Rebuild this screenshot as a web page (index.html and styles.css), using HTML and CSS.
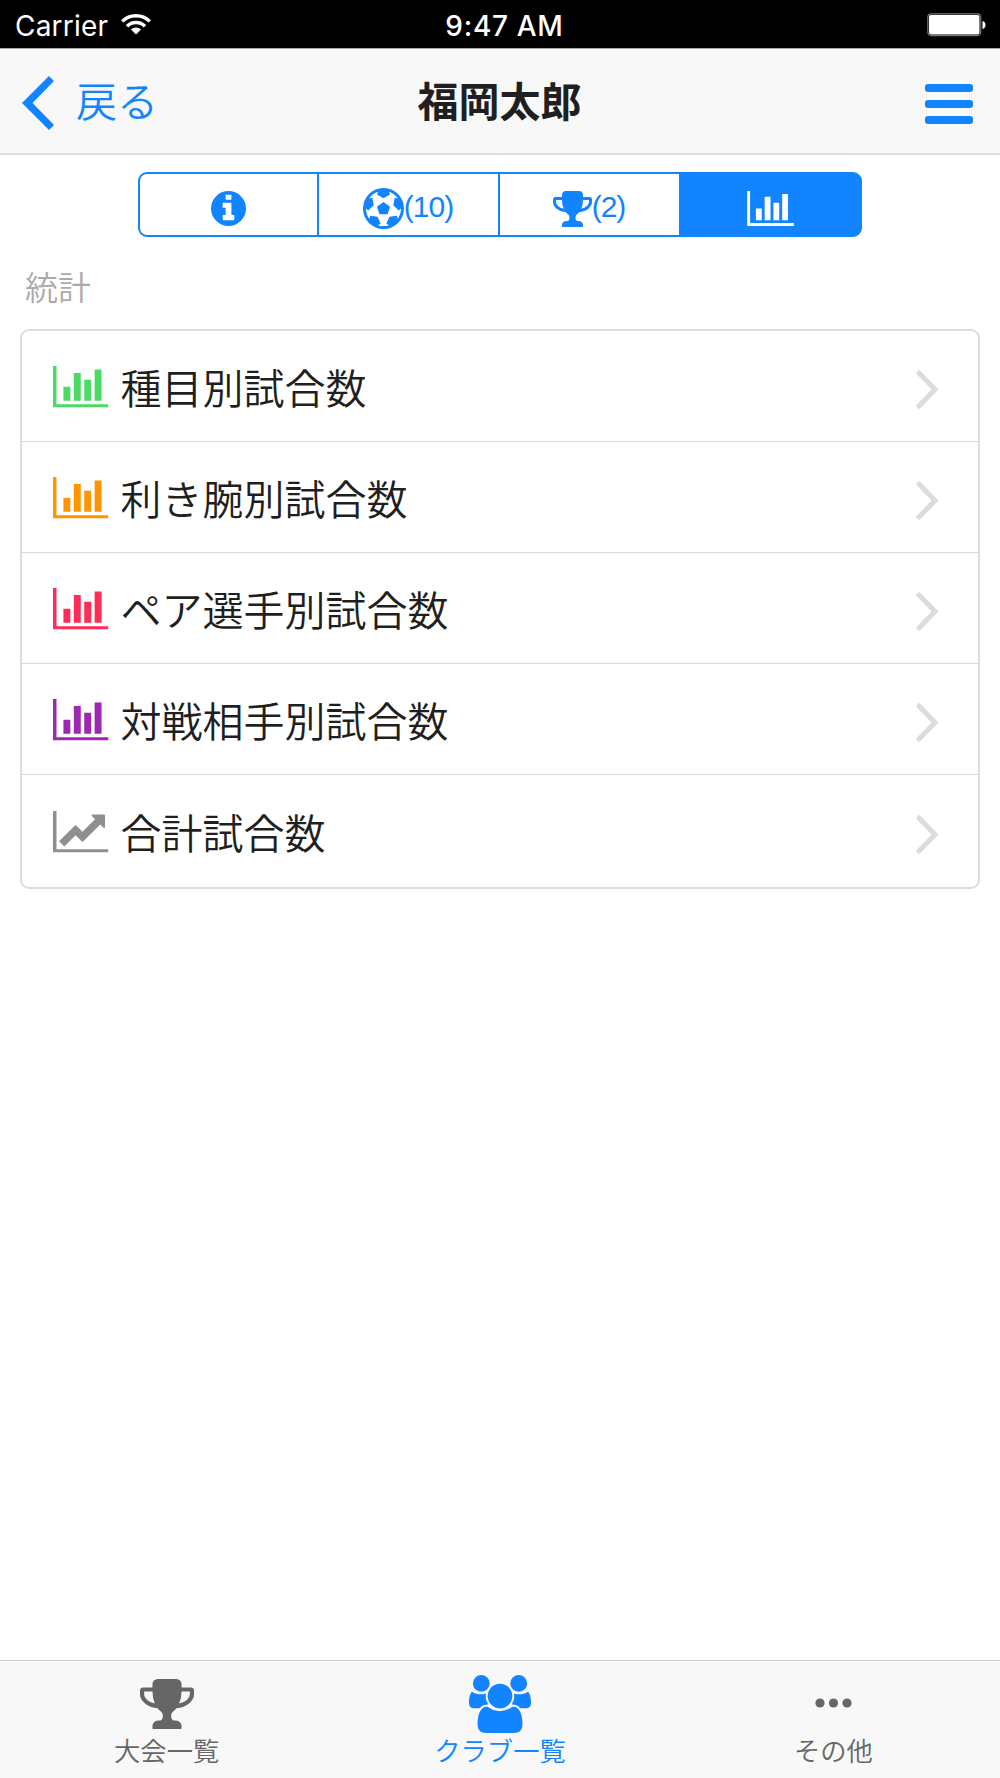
FILE: index.html
```html
<!DOCTYPE html>
<html lang="ja">
<head>
<meta charset="utf-8">
<title>福岡太郎</title>
<link rel="stylesheet" href="styles.css">
</head>
<body>
<svg class="defs" width="0" height="0" aria-hidden="true">
  <symbol id="bars" viewBox="0 128 2048 1536"><path d="M640 896v512H384V896zM1024 384v1024H768V384zM2048 1536v128H0V128h128v1408zM1408 640v768h-256V640zM1792 256v1152h-256V256z"/></symbol>
  <symbol id="line" viewBox="0 128 2048 1536"><path d="M2048 1536v128H0V128h128v1408zM1920 288v435q0 21-19.500 29.500t-35.500-7.500l-121-121-633 633q-10 10-23 10t-23-10l-233-233-416 416-192-192 585-585q10-10 23-10t23 10l233 233 464-464-121-121q-16-16-7.500-35.500t29.500-19.500h435q14 0 23 9t9 23z"/></symbol>
  <symbol id="trophy" viewBox="0 128 1664 1536"><path d="M458 883q-74-162-74-371H128v96q0 78 94.500 162T458 883zM1536 608v-96h-256q0 209-74 371 141-29 235.500-113T1536 608zM1664 480v128q0 71-41.500 143t-112 130-173 97.500T1122 1024q-42 54-95 95-38 34-52.500 72.500T960 1280q0 54 30.500 91t97.500 37q75 0 133.500 45.500T1280 1568v64q0 14-9 23t-23 9H416q-14 0-23-9t-9-23v-64q0-69 58.500-114.500T576 1408q67 0 97.500-37t30.500-91q0-50-14.500-88.500T637 1119q-53-41-95-95-113-5-215.500-44.500t-173-97.500-112-130T0 608V480q0-40 28-68t68-28h288v-96q0-66 47-113t113-47h576q66 0 113 47t47 113v96h288q40 0 68 28t28 68z"/></symbol>
  <symbol id="chevron" viewBox="0 0 23 39"><path d="M3 3L19 19.500L3 36" fill="none" stroke="currentColor" stroke-width="5" stroke-linecap="round" stroke-linejoin="miter"/></symbol>
</svg>

<div class="status">
  <div class="carrier">Carrier
    <svg class="wifi" viewBox="0 0 30 22"><g fill="none" stroke="currentColor" stroke-width="3.400"><path d="M1.200 8.400a19.500 19.500 0 0 1 27.600 0"/><path d="M6 13.200a12.700 12.700 0 0 1 18 0"/></g><path d="M15 21.500l-5-5a7.100 7.100 0 0 1 10 0z" fill="currentColor"/></svg>
  </div>
  <div class="clock">9:47 AM</div>
  <svg class="battery" viewBox="0 0 60 24"><rect x=".8" y=".8" width="53" height="21.800" rx="3.500" fill="none" stroke="#777" stroke-width="1.200"/><rect x="2" y="2" width="50.500" height="19.400" rx="2" fill="#fff"/><path d="M55.500 8c4 1 4 7 0 8z" fill="#fff"/></svg>
</div>

<header class="nav">
  <a class="back"><svg viewBox="0 0 32 54"><path d="M27 0l5 5L10.500 27 32 49l-5 5L0 27z"/></svg><span>戻る</span></a>
  <h1>福岡太郎</h1>
  <div class="menu"><i></i><i></i><i></i></div>
</header>

<main>
  <div class="segments">
    <div class="seg"><svg class="info" viewBox="0 128 1536 1536"><path d="M1024 1376v-160q0-14-9-23t-23-9h-96V672q0-14-9-23t-23-9H544q-14 0-23 9t-9 23v160q0 14 9 23t23 9h96v320h-96q-14 0-23 9t-9 23v160q0 14 9 23t23 9h448q14 0 23-9t9-23zM896 480V320q0-14-9-23t-23-9H672q-14 0-23 9t-9 23v160q0 14 9 23t23 9h192q14 0 23-9t9-23zM1536 896a768 768 0 1 1-1536 0 768 768 0 0 1 1536 0z"/></svg></div>
    <div class="seg"><svg class="ball" viewBox="0 0 1792 1792"><path fill-rule="evenodd" d="M609 816l287-208 287 208-109 336H719zM896 0q182 0 348 71t286 191 191 286 71 348-71 348-191 286-286 191-348 71-348-71-286-191-191-286T0 896t71-348 191-286T548 71 896 0zm619 1350q149-203 149-454v-3l-102 89-240-224 63-323 134 12q-150-206-389-282l53 124-287 159-287-159 53-124q-239 76-389 282l135-12 62 323-240 224-102-89v3q0 251 149 454l30-132 326 40 139 298-116 69q117 39 240 39t240-39l-116-69 139-298 326-40z"/></svg><span>(10)</span></div>
    <div class="seg"><svg class="cup"><use href="#trophy"/></svg><span>(2)</span></div>
    <div class="seg active"><svg class="chart"><use href="#bars"/></svg></div>
  </div>

  <h2>統計</h2>

  <ul class="list">
    <li><svg class="icon green"><use href="#bars"/></svg><span>種目別試合数</span><svg class="chevron"><use href="#chevron"/></svg></li>
    <li><svg class="icon orange"><use href="#bars"/></svg><span>利き腕別試合数</span><svg class="chevron"><use href="#chevron"/></svg></li>
    <li><svg class="icon red"><use href="#bars"/></svg><span>ペア選手別試合数</span><svg class="chevron"><use href="#chevron"/></svg></li>
    <li><svg class="icon purple"><use href="#bars"/></svg><span>対戦相手別試合数</span><svg class="chevron"><use href="#chevron"/></svg></li>
    <li><svg class="icon gray"><use href="#line"/></svg><span>合計試合数</span><svg class="chevron"><use href="#chevron"/></svg></li>
  </ul>
</main>

<footer class="tabs">
  <a class="tab"><svg class="tab-cup"><use href="#trophy"/></svg><span>大会一覧</span></a>
  <a class="tab current"><svg class="people" viewBox="0 0 64 60"><circle cx="13.300" cy="8.400" r="8.400"/><circle cx="50.700" cy="8.400" r="8.400"/><path d="M4 16.700c5 3.300 11 3.300 16 1.200v15.400H7c-4.500 0-6-1.800-6-5.800 0-4 .8-8.800 3-10.800zM60 16.700c-5 3.300-11 3.300-16 1.200v15.400h13c4.500 0 6-1.800 6-5.800 0-4-.8-8.800-3-10.800z"/><g class="front"><path d="M19.500 30.500c8 6 17 6 25 0 8 0 11 9 11 18.500 0 6.500-3.500 10-9.700 10H18.200c-6.200 0-9.700-3.500-9.700-10 0-9.500 3-18.500 11-18.500z"/><circle cx="32" cy="21" r="13.300"/></g></svg><span>クラブ一覧</span></a>
  <a class="tab"><svg class="dots" viewBox="0 0 37 10"><circle cx="5" cy="5" r="4.600"/><circle cx="18.500" cy="5" r="4.600"/><circle cx="32" cy="5" r="4.600"/></svg><span>その他</span></a>
</footer>
</body>
</html>
```
FILE: styles.css
```css
* { box-sizing: border-box; }

body {
  margin: 0;
  height: 1778px;
  display: flex;
  flex-direction: column;
  background: #fff;
  color: #1f1f21;
  font-family: "Noto Sans CJK JP", sans-serif;
  font-weight: 350;
}

svg { display: block; flex: none; fill: currentColor; }
.defs { position: absolute; }

.status {
  height: 48px;
  display: grid;
  grid-template-columns: 1fr auto 1fr;
  align-items: center;
  padding: 3px 13px 0 15px;
  background: #000;
  color: #fff;
  font: 400 28px/44px Inter, sans-serif;
}
.carrier { display: flex; align-items: center; gap: 13px; letter-spacing: .2px; }
.wifi { width: 30px; height: 22px; margin-top: -3px; }
.clock { font-weight: 500; padding-left: 7px; letter-spacing: .7px; }
.battery { width: 60px; height: 24px; justify-self: end; margin-top: -1px; }

.nav {
  height: 107px;
  display: grid;
  grid-template-columns: 1fr auto 1fr;
  align-items: center;
  padding: 0 27px 0 22px;
  background: #f8f8f8;
  border-top: 1px solid #aaa;
  border-bottom: 2px solid #ddd;
}
.back { display: flex; align-items: center; gap: 22px; color: #1284ff; font-size: 41px; line-height: 60px; }
.back svg { width: 32px; height: 54px; margin-top: 4px; }
.back span { margin-top: -4px; }
.nav h1 { margin: -5px 0 0 4px; font-size: 41px; line-height: 60px; font-weight: 700; }
.menu { justify-self: end; display: grid; gap: 8px; margin-top: 5px; }
.menu i { width: 48px; height: 8px; border-radius: 3px; background: #1284ff; }

.segments {
  width: 724px;
  height: 65px;
  margin: 17px auto 0;
  display: grid;
  grid-template-columns: 177px repeat(3, 181px);
  border: 2px solid #1284ff;
  border-radius: 9px;
  color: #1284ff;
  font: 400 30px/34px "Liberation Sans", sans-serif;
}
.seg { display: flex; align-items: center; justify-content: center; padding-top: 1px; }
.seg + .seg { border-left: 2px solid #1284ff; }
.seg svg { margin-top: 7px; }
.seg span { margin: 3px 1px 0 0; letter-spacing: -1px; }
.active { background: #1284ff; color: #fff; border-radius: 0 7px 7px 0; box-shadow: 1px 0 #1284ff; }
.info { width: 35px; height: 35px; }
.ball { width: 41px; height: 41px; }
.cup { width: 39px; height: 36px; }
.chart { width: 47px; height: 35px; }

h2 { margin: 25px 0 0 25px; font-size: 33px; line-height: 48px; font-weight: 350; color: #aaa; }

.list {
  list-style: none;
  margin: 19px 20px 0;
  padding: 0;
  border: 2px solid #ddd;
  border-radius: 9px;
}
.list li { height: 111px; display: flex; align-items: center; padding: 2px 39px 0 31px; font-size: 41px; border-bottom: 1px solid #d9d9d9; }
.list li:last-child { height: 112px; border-bottom: 0; }
.list span { flex: 1; margin: -2px 0 0 12px; line-height: 60px; }
.icon { width: 55.500px; height: 41.600px; }
.chevron { width: 23px; height: 39px; color: #dcdcdc; margin-top: 5px; }
.green { color: #4cd964; }
.orange { color: #ff9500; }
.red { color: #ff2d55; }
.purple { color: #9c27b0; }
.gray { color: #8e8e93; }

.tabs {
  margin-top: auto;
  height: 118px;
  display: grid;
  grid-template-columns: repeat(3, 1fr);
  background: #f8f8f8;
  border-top: 1px solid #ccc;
  color: #666;
}
.tab { display: flex; flex-direction: column; align-items: center; justify-content: flex-end; font-size: 26.300px; line-height: 38px; padding-bottom: 9px; }
.current { color: #1284ff; }
.tab-cup { width: 54px; height: 50px; margin-bottom: 2px; }
.people { width: 64px; height: 60px; margin-bottom: -4px; }
.front { stroke: #f8f8f8; stroke-width: 2px; }
.dots { width: 37px; height: 10px; margin-bottom: 23px; }
```
